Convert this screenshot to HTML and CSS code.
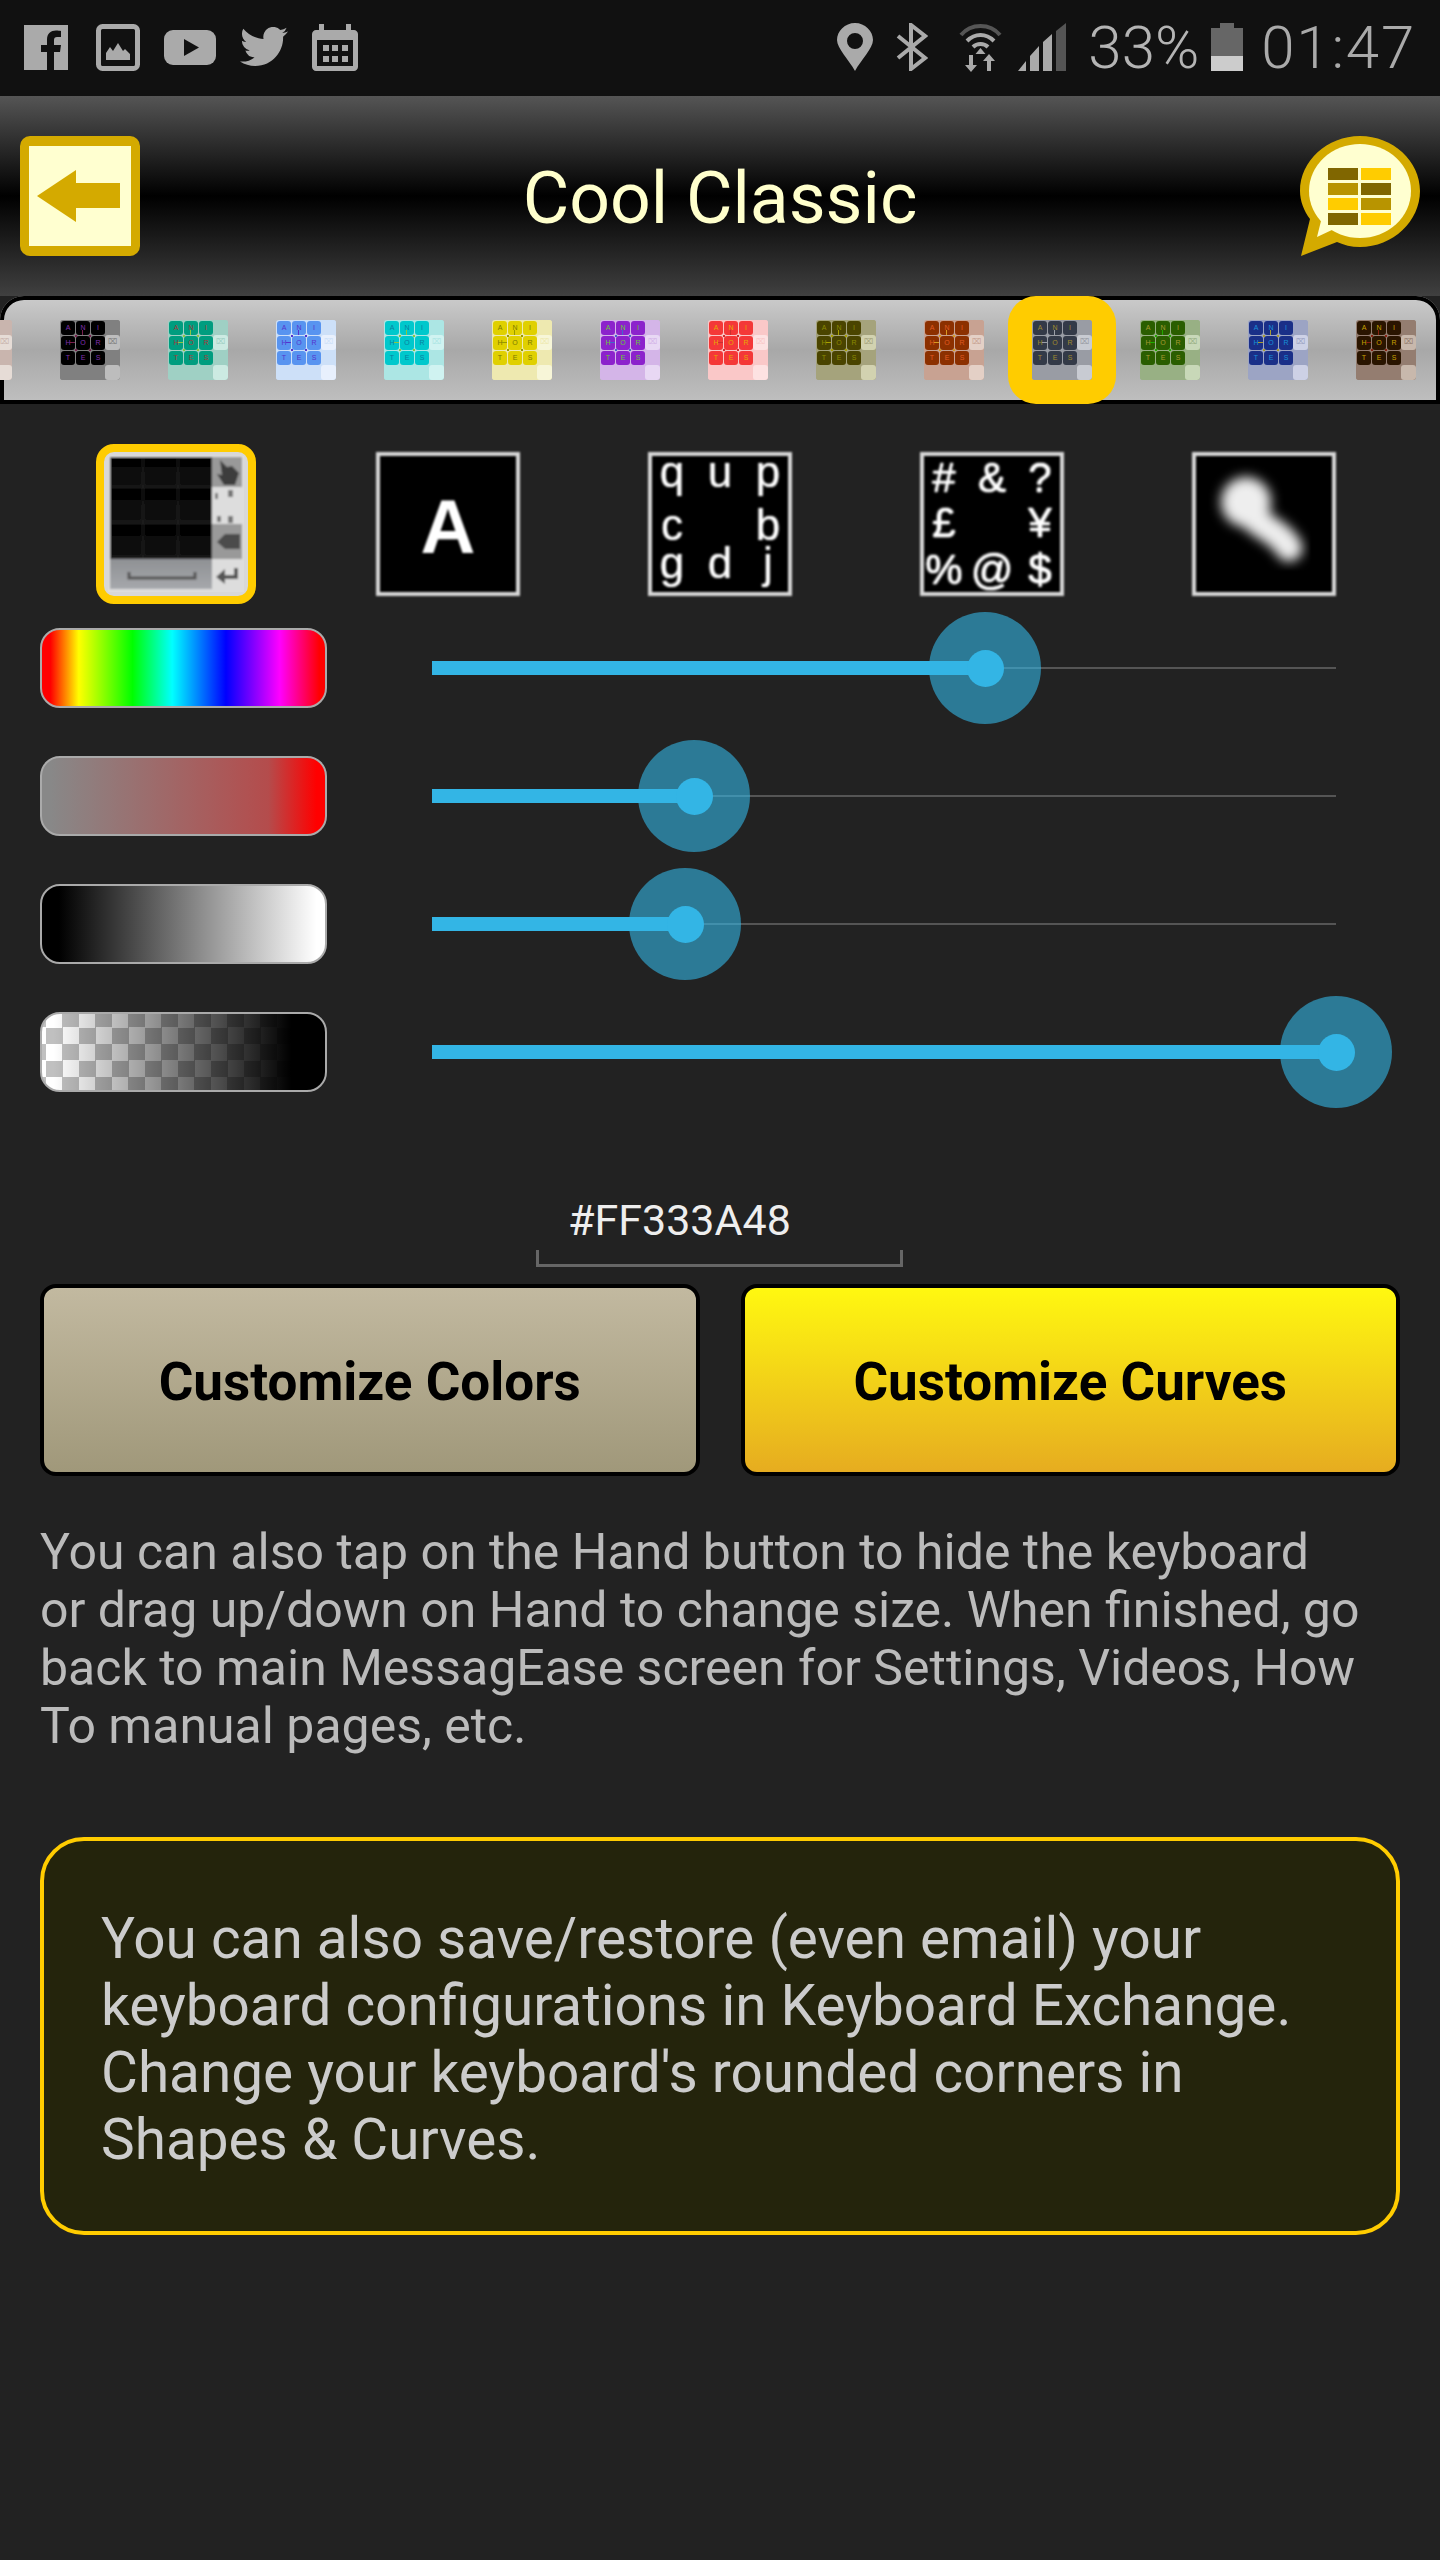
FILE: index.html
```html
<!DOCTYPE html>
<html lang="en">

<head>
    <meta charset="UTF-8">
    <meta name="viewport" content="width=device-width, initial-scale=1.0">
    <title>Cool Classic</title>
    <link rel="stylesheet" href="styles.css">
</head>

<body>
    <!-- Android status bar -->
    <div class="status-bar">
        <div class="status-left">
            <svg class="icon-fb" viewBox="0 0 44 45"><rect width="44" height="45" fill="#aaa"/><path fill="#111" d="M30 45V27h6l1-7h-7v-5c0-2 1-3 3-3h4V6c-1 0-3-.4-5-.4-5 0-9 3-9 9V20h-6v7h6v18z"/></svg>
            <svg class="icon-img" viewBox="0 0 44 47"><rect x="2.500" y="2.500" width="39" height="42" rx="4" fill="none" stroke="#aaa" stroke-width="5"/><path fill="#aaa" d="M10 36v-7l4-6 3 4 5-8 5 8 2-2 5 5v6z"/></svg>
            <svg class="icon-yt" viewBox="0 0 52 35"><rect width="52" height="35" rx="9" fill="#aaa"/><path fill="#111" d="M20 9l15 8.500-15 8.500z"/></svg>
            <svg class="icon-tw" viewBox="0 0 24 20"><path fill="#aaa" transform="translate(0 -2.300)" d="M23.953 4.570a10 10 0 01-2.825.775 4.958 4.958 0 002.163-2.723c-.951.555-2.005.959-3.127 1.184a4.920 4.920 0 00-8.384 4.482C7.690 8.095 4.067 6.130 1.640 3.162a4.822 4.822 0 00-.666 2.475c0 1.710.870 3.213 2.188 4.096a4.904 4.904 0 01-2.228-.616v.060a4.923 4.923 0 003.946 4.827 4.996 4.996 0 01-2.212.085 4.936 4.936 0 004.604 3.417 9.867 9.867 0 01-6.102 2.105c-.390 0-.779-.023-1.170-.067a13.995 13.995 0 007.557 2.209c9.053 0 13.998-7.496 13.998-13.985 0-.210 0-.420-.015-.630A9.935 9.935 0 0024 4.590z"/></svg>
            <svg class="icon-cal" viewBox="0 0 46 47"><path fill="#aaa" d="M7 0h5v6h22V0h5v6h3c2 0 4 2 4 4v33c0 2-2 4-4 4H4c-2 0-4-2-4-4V10c0-2 2-4 4-4h3z"/><rect x="5" y="16" width="36" height="26" fill="#111"/><path fill="#aaa" d="M11 21h6v6h-6zM20 21h6v6h-6zM30 21h6v6h-6zM11 32h6v6h-6zM20 32h6v6h-6zM30 32h6v6h-6z"/></svg>
        </div>
        <div class="status-right">
            <svg class="icon-pin" viewBox="0 0 36 48"><path fill="#aaa" fill-rule="evenodd" d="M18 48C12 37 0 25 0 17 0 8 8 0 18 0s18 8 18 17c0 8-12 20-18 31zm0-38a8 8 0 100 16 8 8 0 000-16z"/></svg>
            <svg class="icon-bt" viewBox="0 0 32 48"><path fill="none" stroke="#aaa" stroke-width="4" d="M2 13l27 22-14 11V2l14 11L2 35"/></svg>
            <svg class="icon-wifi" viewBox="0 0 43 49"><path fill="none" stroke="#555" stroke-width="4" d="M2 12C12 0 31 0 41 12"/><path fill="none" stroke="#aaa" stroke-width="4" d="M8 18c8-8 19-8 27 0M14 24c4-4 11-4 15 0"/><path fill="#aaa" d="M21.500 25l5 6h-10zM10 32h4v10h4l-6 7-6-7h4zM30 31l6 7h-4v10h-4V38h-4z"/></svg>
            <svg class="icon-signal" viewBox="0 0 49 48"><path fill="#aaa" d="M0 48l8-10v10zM12 48V33l9-10v25zM25 48V19l9-8v37z"/><path fill="#555" d="M38 48V8l10-8v48z"/></svg>
            <span class="status-batt-text">33%</span>
            <svg class="icon-batt" viewBox="0 0 32 48"><path fill="#666" d="M9 0h14v5h9v28H0V5h9z"/><rect y="33" width="32" height="15" fill="#ccc"/></svg>
            <span class="status-time">01:47</span>
        </div>
    </div>

    <!-- Title bar -->
    <div class="title-bar">
        <svg class="title-btn" viewBox="0 0 120 120"><rect width="120" height="120" rx="10" fill="#d4aa00"/><rect x="9" y="10" width="102" height="100" fill="#ffffd0"/><path fill="#d4aa00" d="M17 60l39-26v13h44v25H56v14z"/></svg>
        <h1 class="title">Cool Classic</h1>
        <svg class="title-btn" viewBox="0 0 120 120"><path fill="#d4aa00" d="M1 120l9-37C4 75 0 65 0 55 0 25 27 0 60 0s60 25 60 55-27 56-60 56c-9 0-16-2-23-5z"/><ellipse cx="60" cy="55" rx="51" ry="47" fill="#ffffd0"/><path fill="#ffffd0" d="M17 101l5-20 12 12z"/><path fill="#806600" d="M28 32h30v12H28zM61 47h30v12H61zM28 77h30v12H28z"/><path fill="#ffcc00" d="M61 32h30v12H61zM28 62h30v12H28zM61 77h30v12H61z"/><path fill="#b89400" d="M28 47h30v12H28zM61 62h30v12H61z"/></svg>
    </div>

    <!-- Theme picker strip -->
    <div class="strip">
        <div class="slot slot-first"><div class="tile th-rose"><span class="k"></span><span class="k"></span><span class="k"></span><span class="d"></span><span class="k"></span><span class="k"></span><span class="k"></span><span class="l">⌧</span><span class="k"></span><span class="k"></span><span class="k"></span><span class="d"></span><span class="bar"></span><span class="l"></span></div></div>
        <div class="slot"><div class="tile th-black"><span class="k">A</span><span class="k">N</span><span class="k">I</span><span class="d"></span><span class="k">H</span><span class="k o">O</span><span class="k">R</span><span class="l">⌧</span><span class="k">T</span><span class="k">E</span><span class="k">S</span><span class="d"></span><span class="bar"></span><span class="l"></span></div></div>
        <div class="slot"><div class="tile th-teal"><span class="k">A</span><span class="k">N</span><span class="k">I</span><span class="d"></span><span class="k">H</span><span class="k o">O</span><span class="k">R</span><span class="l">⌧</span><span class="k">T</span><span class="k">E</span><span class="k">S</span><span class="d"></span><span class="bar"></span><span class="l"></span></div></div>
        <div class="slot"><div class="tile th-blue"><span class="k">A</span><span class="k">N</span><span class="k">I</span><span class="d"></span><span class="k">H</span><span class="k o">O</span><span class="k">R</span><span class="l">⌧</span><span class="k">T</span><span class="k">E</span><span class="k">S</span><span class="d"></span><span class="bar"></span><span class="l"></span></div></div>
        <div class="slot"><div class="tile th-cyan"><span class="k">A</span><span class="k">N</span><span class="k">I</span><span class="d"></span><span class="k">H</span><span class="k o">O</span><span class="k">R</span><span class="l">⌧</span><span class="k">T</span><span class="k">E</span><span class="k">S</span><span class="d"></span><span class="bar"></span><span class="l"></span></div></div>
        <div class="slot"><div class="tile th-yellow"><span class="k">A</span><span class="k">N</span><span class="k">I</span><span class="d"></span><span class="k">H</span><span class="k o">O</span><span class="k">R</span><span class="l">⌧</span><span class="k">T</span><span class="k">E</span><span class="k">S</span><span class="d"></span><span class="bar"></span><span class="l"></span></div></div>
        <div class="slot"><div class="tile th-purple"><span class="k">A</span><span class="k">N</span><span class="k">I</span><span class="d"></span><span class="k">H</span><span class="k o">O</span><span class="k">R</span><span class="l">⌧</span><span class="k">T</span><span class="k">E</span><span class="k">S</span><span class="d"></span><span class="bar"></span><span class="l"></span></div></div>
        <div class="slot"><div class="tile th-red"><span class="k">A</span><span class="k">N</span><span class="k">I</span><span class="d"></span><span class="k">H</span><span class="k o">O</span><span class="k">R</span><span class="l">⌧</span><span class="k">T</span><span class="k">E</span><span class="k">S</span><span class="d"></span><span class="bar"></span><span class="l"></span></div></div>
        <div class="slot"><div class="tile th-olive"><span class="k">A</span><span class="k">N</span><span class="k">I</span><span class="d"></span><span class="k">H</span><span class="k o">O</span><span class="k">R</span><span class="l">⌧</span><span class="k">T</span><span class="k">E</span><span class="k">S</span><span class="d"></span><span class="bar"></span><span class="l"></span></div></div>
        <div class="slot"><div class="tile th-rust"><span class="k">A</span><span class="k">N</span><span class="k">I</span><span class="d"></span><span class="k">H</span><span class="k o">O</span><span class="k">R</span><span class="l">⌧</span><span class="k">T</span><span class="k">E</span><span class="k">S</span><span class="d"></span><span class="bar"></span><span class="l"></span></div></div>
        <div class="slot slot-active"><div class="tile th-slate"><span class="k">A</span><span class="k">N</span><span class="k">I</span><span class="d"></span><span class="k">H</span><span class="k o">O</span><span class="k">R</span><span class="l">⌧</span><span class="k">T</span><span class="k">E</span><span class="k">S</span><span class="d"></span><span class="bar"></span><span class="l"></span></div></div>
        <div class="slot"><div class="tile th-green"><span class="k">A</span><span class="k">N</span><span class="k">I</span><span class="d"></span><span class="k">H</span><span class="k o">O</span><span class="k">R</span><span class="l">⌧</span><span class="k">T</span><span class="k">E</span><span class="k">S</span><span class="d"></span><span class="bar"></span><span class="l"></span></div></div>
        <div class="slot"><div class="tile th-navy"><span class="k">A</span><span class="k">N</span><span class="k">I</span><span class="d"></span><span class="k">H</span><span class="k o">O</span><span class="k">R</span><span class="l">⌧</span><span class="k">T</span><span class="k">E</span><span class="k">S</span><span class="d"></span><span class="bar"></span><span class="l"></span></div></div>
        <div class="slot"><div class="tile th-brown"><span class="k">A</span><span class="k">N</span><span class="k">I</span><span class="d"></span><span class="k">H</span><span class="k o">O</span><span class="k">R</span><span class="l">⌧</span><span class="k">T</span><span class="k">E</span><span class="k">S</span><span class="d"></span><span class="bar"></span><span class="l"></span></div></div>
    </div>

    <!-- Part selector thumbnails -->
    <div class="parts">
        <div class="part part-active">
            <svg class="part-kbd" viewBox="0 0 136 136">
                <defs>
                    <linearGradient id="keygrad" x1="0" y1="0" x2="0" y2="1"><stop offset="0" stop-color="#000"/><stop offset="1" stop-color="#141414"/></linearGradient>
                    <linearGradient id="bargrad" x1="0" y1="0" x2="0" y2="1"><stop offset="0" stop-color="#8f9194"/><stop offset="1" stop-color="#a6a8ac"/></linearGradient>
                    <filter id="soft"><feGaussianBlur stdDeviation="1"/></filter>
                </defs>
                <g filter="url(#soft)">
                    <rect x="-4" y="-4" width="144" height="144" fill="#dddddd"/>
                    <rect x="2" y="1" width="102" height="31" fill="url(#keygrad)"/>
                    <rect x="2" y="32" width="102" height="36" fill="url(#keygrad)"/>
                    <rect x="2" y="68" width="102" height="35" fill="url(#keygrad)"/>
                    <path fill="none" stroke="#2a2a2a" d="M35 1v102M70 1v102M2 31h102M2 67h102"/>
                    <rect x="2" y="103" width="102" height="30" fill="url(#bargrad)"/>
                    <rect x="104" y="1" width="30" height="30" fill="#999"/>
                    <rect x="104" y="68" width="30" height="35" fill="#999"/>
                    <path fill="#3c3c3c" d="M112 4l7 7 5-1 7 7-4 12h-11l-7-11 5 1z"/>
                    <path fill="#777" d="M120 34h5v7h-5zM107 37h3v6h-3zM109 60h4v6h-4zM120 60h5v7h-5z"/>
                    <path fill="#4c4c4c" d="M109 86l8-8h15v15h-15z"/>
                    <path fill="none" stroke="#555" stroke-width="3" d="M21 116v6h66v-6"/>
                    <path fill="none" stroke="#555" stroke-width="4" d="M128 112v9h-14"/>
                    <path fill="#555" d="M117 113v15l-9-7z"/>
                </g>
            </svg>
        </div>
        <div class="part part-letter"><span>A</span></div>
        <div class="part part-glyphs"><span>q</span><span>u</span><span>p</span><span>c</span><span></span><span>b</span><span>g</span><span>d</span><span>j</span></div>
        <div class="part part-glyphs part-symbols"><span>#</span><span>&amp;</span><span>?</span><span>£</span><span></span><span>¥</span><span>%</span><span>@</span><span>$</span></div>
        <div class="part part-trail">
            <svg viewBox="0 0 136 136">
                <defs><filter id="trailblur" x="-30%" y="-30%" width="160%" height="160%"><feGaussianBlur stdDeviation="6"/></filter></defs>
                <g filter="url(#trailblur)">
                    <circle cx="50" cy="46" r="25" fill="#eee"/>
                    <path fill="none" stroke="#eee" stroke-width="27" stroke-linecap="round" d="M50 50C56 70 82 72 93 92"/>
                </g>
            </svg>
        </div>
    </div>

    <!-- Colour sliders -->
    <div class="sliders">
        <div class="slider-row">
            <div class="swatch swatch-hue"></div>
            <div class="slider"><div class="slider-halo" style="left:61.2%"></div><div class="slider-fill" style="width:61.2%"></div><div class="slider-dot" style="left:61.2%"></div></div>
        </div>
        <div class="slider-row">
            <div class="swatch swatch-sat"></div>
            <div class="slider"><div class="slider-halo" style="left:29%"></div><div class="slider-fill" style="width:29%"></div><div class="slider-dot" style="left:29%"></div></div>
        </div>
        <div class="slider-row">
            <div class="swatch swatch-val"></div>
            <div class="slider"><div class="slider-halo" style="left:28%"></div><div class="slider-fill" style="width:28%"></div><div class="slider-dot" style="left:28%"></div></div>
        </div>
        <div class="slider-row">
            <div class="swatch swatch-alpha"></div>
            <div class="slider"><div class="slider-halo" style="left:100%"></div><div class="slider-fill" style="width:100%"></div><div class="slider-dot" style="left:100%"></div></div>
        </div>
    </div>

    <div class="hex-field">#FF333A48</div>

    <div class="buttons">
        <div class="btn btn-colors">Customize Colors</div>
        <div class="btn btn-curves">Customize Curves</div>
    </div>

    <p class="help">You can also tap on the Hand button to hide the keyboard<br>or drag up/down on Hand to change size. When finished, go<br>back to main MessagEase screen for Settings, Videos, How<br>To manual pages, etc.</p>

    <div class="tip">You can also save/restore (even email) your<br>keyboard configurations in Keyboard Exchange.<br>Change your keyboard's rounded corners in<br>Shapes &amp; Curves.</div>
</body>

</html>
```

FILE: styles.css
```css
* {
    box-sizing: border-box;
}

body {
    margin: 0;
    background: #222222;
    font-family: Roboto, sans-serif;
    width: 1440px;
    height: 2560px;
    overflow: hidden;
}

/* Status bar */
.status-bar {
    height: 96px;
    background: #111111;
    display: flex;
    justify-content: space-between;
    padding: 0 24px 0 24px;
    color: #aaaaaa;
}

.status-left {
    display: flex;
    align-items: center;
    gap: 24px;
    padding-bottom: 2px;
}

.status-right {
    display: flex;
    align-items: center;
    padding-bottom: 2px;
}

.icon-fb { width: 44px; height: 45px; margin-right: 4px; }
.icon-img { width: 44px; height: 47px; }
.icon-yt { width: 52px; height: 35px; }
.icon-tw { width: 48px; height: 40px; }
.icon-cal { width: 46px; height: 47px; }

.icon-pin { width: 36px; height: 48px; }
.icon-bt { width: 32px; height: 48px; margin-left: 23px; }
.icon-wifi { width: 43px; height: 49px; margin-left: 31px; }
.icon-signal { width: 49px; height: 48px; margin-left: 16px; }
.icon-batt { width: 32px; height: 48px; margin-left: 12px; }

.status-batt-text {
    font-size: 60px;
    font-weight: 300;
    margin-left: 21px;
    color: #b4b4b4;
}

.status-time {
    font-size: 60px;
    font-weight: 300;
    margin-left: 18px;
    letter-spacing: 1.800px;
}

/* Title bar */
.title-bar {
    height: 200px;
    background: linear-gradient(to bottom, #555555 0%, #000000 50%, #404040 100%);
    display: flex;
    justify-content: space-between;
    align-items: flex-start;
    padding: 40px 20px 0;
}

.title-btn {
    width: 120px;
    height: 120px;
}

.title {
    margin: 0;
    font-size: 71.500px;
    font-weight: 400;
    line-height: 88px;
    padding-top: 19px;
    color: #ffffcc;
}

/* Theme strip */
.strip {
    height: 108px;
    display: flex;
    overflow: hidden;
    border-radius: 24px 24px 0 0;
    background: linear-gradient(to bottom, #cccccc 0%, #a8a8a8 50%, #c0c0c0 100%);
    box-shadow: inset 0 0 0 4px #000000;
}

.slot {
    flex: 0 0 108px;
    display: flex;
    align-items: center;
    justify-content: center;
}

.slot-first {
    margin-left: -72px;
}

.slot-active {
    background: #ffcc00;
    border-radius: 28px;
}

.tile {
    width: 60px;
    height: 60px;
    display: grid;
    grid-template-columns: repeat(4, 15px);
    grid-template-rows: repeat(4, 15px);
    border-radius: 3px;
    overflow: hidden;
    background: var(--dim);
    font-family: "Liberation Sans", sans-serif;
    font-size: 7px;
    line-height: 14px;
    text-align: center;
}

.k {
    position: relative;
    width: 14px;
    height: 14px;
    margin: 1px 0 0 1px;
    border-radius: 3px;
    background: var(--key);
    color: var(--ink);
}

/* little swipe marks round the centre key */
.k.o::after {
    content: "";
    position: absolute;
    left: -6px;
    top: -6px;
    width: 26px;
    height: 26px;
    background:
        linear-gradient(var(--mark), var(--mark)) 0 12px / 5px 1px no-repeat,
        linear-gradient(var(--mark), var(--mark)) 21px 12px / 5px 1px no-repeat,
        linear-gradient(var(--mark), var(--mark)) 12px 0 / 1px 5px no-repeat,
        linear-gradient(var(--mark), var(--mark)) 12px 21px / 1px 5px no-repeat,
        linear-gradient(var(--mark), var(--mark)) 5px 5px / 2px 2px no-repeat,
        linear-gradient(var(--mark), var(--mark)) 19px 5px / 2px 2px no-repeat,
        linear-gradient(var(--mark), var(--mark)) 5px 19px / 2px 2px no-repeat,
        linear-gradient(var(--mark), var(--mark)) 19px 19px / 2px 2px no-repeat;
}

.d {
    background: var(--dim);
}

.l {
    background: var(--lit);
    color: var(--dim);
    border-radius: 3px;
    font-size: 8px;
}

.bar {
    grid-column: span 3;
    background: var(--dim);
}

.th-rose { --key: #c9b5ae; --ink: #c9b5ae; --mark: #c9b5ae; --dim: #c9b5ae; --lit: #e6dcd6; }
.th-black { --key: #000000; --ink: #8030b0; --mark: #7a2050; --dim: #808080; --lit: #bdbdbd; }
.th-teal { --key: #009d7f; --ink: #a83838; --mark: #8cc63f; --dim: #9fd0c4; --lit: #cceae2; }
.th-blue { --key: #5894f0; --ink: #5533cc; --mark: #5533cc; --dim: #cde0f8; --lit: #e8f0fd; }
.th-cyan { --key: #00c8cc; --ink: #0a7fa0; --mark: #8cc63f; --dim: #ace6e4; --lit: #d0f3f1; }
.th-yellow { --key: #e0d000; --ink: #7a7a00; --mark: #999900; --dim: #eee9b0; --lit: #f7f6d8; }
.th-purple { --key: #8c22cc; --ink: #66cc33; --mark: #4466cc; --dim: #d4b5e8; --lit: #e8d8f4; }
.th-red { --key: #f43838; --ink: #e8a800; --mark: #cc3030; --dim: #fac8c8; --lit: #fde2e2; }
.th-olive { --key: #4a4400; --ink: #8a8a00; --mark: #a8a000; --dim: #a5a37c; --lit: #d2d2b0; }
.th-rust { --key: #8c3000; --ink: #e05a20; --mark: #d89a20; --dim: #c8a292; --lit: #e4d0c6; }
.th-slate { --key: #333a48; --ink: #a08a30; --mark: #9a9fa8; --dim: #999ca4; --lit: #c8cbd2; }
.th-green { --key: #2a5e00; --ink: #a89a30; --mark: #22aa00; --dim: #98b084; --lit: #c8d8b8; }
.th-navy { --key: #1a2f88; --ink: #1890d8; --mark: #a89a30; --dim: #9ca4c4; --lit: #cdd1e6; }
.th-brown { --key: #2a1500; --ink: #c8a000; --mark: #882010; --dim: #947d70; --lit: #c8b8ac; }

/* Part thumbnails */
.parts {
    display: flex;
    gap: 128px;
    padding: 48px 0 0 104px;
    height: 200px;
}

.part {
    position: relative;
    width: 144px;
    height: 144px;
    border: 4px solid #d8d8d8;
    background: #000000;
    color: #ffffff;
    font-family: "Liberation Sans", sans-serif;
}

.part svg {
    display: block;
    width: 136px;
    height: 136px;
}

/* rounded yellow frame round the active thumbnail */
.part-active::before {
    content: "";
    position: absolute;
    inset: -12px;
    border: 8px solid #ffcc00;
    border-radius: 18px;
    pointer-events: none;
}

.part-letter {
    display: flex;
    align-items: center;
    justify-content: center;
    font-size: 76px;
    font-weight: 700;
    filter: blur(1px);
}

.part-letter span {
    position: relative;
    top: 2px;
}

.part-glyphs {
    display: grid;
    grid-template-columns: repeat(3, 48px);
    grid-template-rows: 53px 38px 38px;
    justify-content: center;
    justify-items: center;
    align-items: start;
    padding-top: 1px;
    font-size: 44px;
    line-height: 30px;
    text-shadow: 0 0 1px #ffffff;
    filter: blur(1px);
}

.part-symbols {
    grid-template-rows: 45px 47px 37px;
    padding-top: 7px;
    font-size: 42px;
    text-shadow: 0 0 2px #ffffff, 0 0 1px #ffffff;
}

.part-trail {
    overflow: hidden;
    filter: blur(1px);
}

/* Sliders */
.sliders {
    padding-left: 40px;
}

.slider-row {
    display: flex;
    align-items: center;
    height: 128px;
}

.swatch {
    width: 287px;
    height: 80px;
    border-radius: 20px;
    border: 2px solid #aaaaaa;
}

.swatch-hue {
    background: linear-gradient(to right, #ff0000 3%, #ffff00 13%, #00ff00 32%, #00ffff 46%, #0000ff 65%, #ff00ff 84%, #ff0000 98%);
}

.swatch-sat {
    background: linear-gradient(to right, #888888 3%, #b44c4c 80%, #ff0000 97%);
}

.swatch-val {
    background: linear-gradient(to right, #000000 6%, #ffffff 97%);
}

.swatch-alpha {
    background:
        linear-gradient(to right, rgba(0, 0, 0, 0) 4%, #000000 88%),
        repeating-conic-gradient(#c0c0c0 0 25%, #ffffff 0 50%) 4px -3px / 33px 33px;
}

.slider {
    position: relative;
    width: 904px;
    height: 2px;
    margin-left: 105px;
    background: #555555;
}

.slider-halo {
    position: absolute;
    top: 1px;
    width: 112px;
    height: 112px;
    margin: -56px 0 0 -56px;
    border-radius: 50%;
    background: rgba(51, 181, 229, 0.6);
}

.slider-fill {
    position: absolute;
    left: 0;
    top: -6px;
    height: 14px;
    background: #33b5e5;
}

.slider-dot {
    position: absolute;
    top: 1px;
    width: 37px;
    height: 37px;
    margin: -18.500px 0 0 -18.500px;
    border-radius: 50%;
    background: #33b5e5;
}

/* Hex input */
.hex-field {
    position: relative;
    width: 367px;
    height: 72px;
    margin: 79px 0 0 536px;
    padding-left: 32px;
    border-bottom: 3px solid #666666;
    font-size: 43px;
    line-height: 50px;
    color: #eeeeee;
}

.hex-field::before,
.hex-field::after {
    content: "";
    position: absolute;
    bottom: 0;
    width: 3px;
    height: 14px;
    background: #666666;
}

.hex-field::before { left: 0; }
.hex-field::after { right: 0; }

/* Buttons */
.buttons {
    display: flex;
    gap: 41px;
    margin-top: 17px;
    padding: 0 40px;
}

.btn {
    flex: 1;
    height: 192px;
    padding-top: 3px;
    border: 4px solid #000000;
    border-radius: 16px;
    display: flex;
    align-items: center;
    justify-content: center;
    font-size: 53px;
    font-weight: 700;
    color: #000000;
}

.btn-colors {
    background: linear-gradient(to bottom, #c2b9a0, #a0987a);
}

.btn-curves {
    background: linear-gradient(to bottom, #fff810, #e6ac20);
}

/* Help text */
.help {
    margin: 47px 40px 0;
    font-size: 50px;
    line-height: 58px;
    color: #bbbbbb;
}

.tip {
    margin: 82px 40px 0;
    height: 398px;
    padding: 64px 40px 0 57px;
    border: 4px solid #ffcc00;
    border-radius: 44px;
    background: #24240c;
    font-size: 56.700px;
    line-height: 67px;
    color: #cccccc;
}
```
